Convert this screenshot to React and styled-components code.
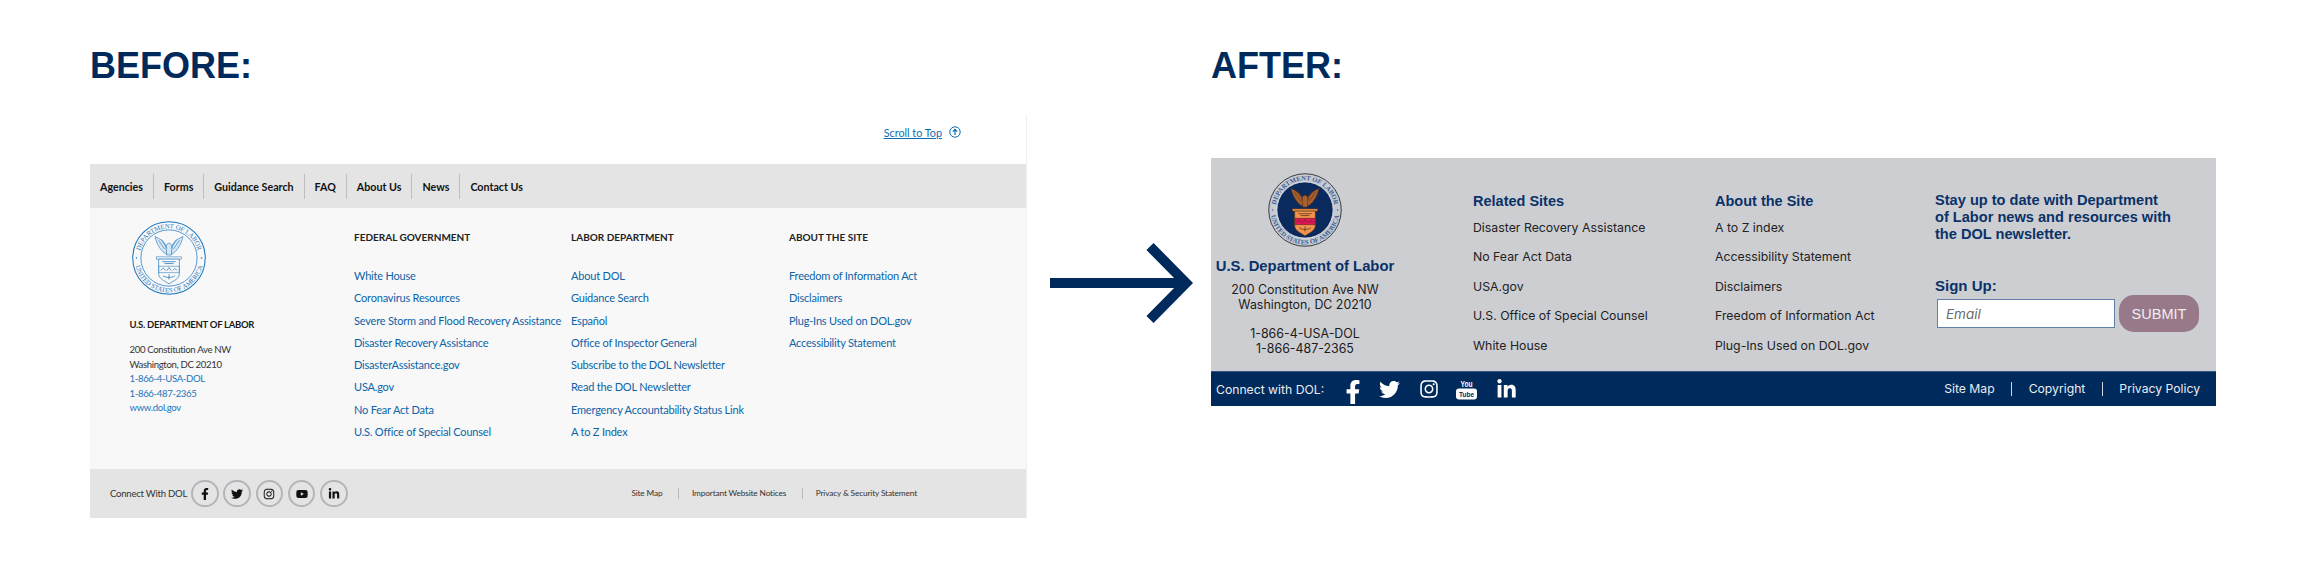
import React from "react";
import styled, { createGlobalStyle } from "styled-components";
import { FaFacebookF, FaTwitter, FaInstagram, FaYoutube, FaLinkedinIn } from "react-icons/fa";

const Global = createGlobalStyle`
  html, body { margin: 0; padding: 0; background: #fff; }
  * { box-sizing: border-box; }
`;

const NAVY = "#002a5c";
const OLD_FONT = `Lato, "Noto Sans", sans-serif`;
const NEW_FONT = `Inter, "Liberation Sans", sans-serif`;
const HEAD_FONT = `"Liberation Sans", Arial, sans-serif`;

const Page = styled.div`
  width: 2298px;
  height: 565px;
  overflow: hidden;
  display: flex;
  align-items: flex-start;
  padding-left: 90px;
  font-family: ${OLD_FONT};
`;
const Section = styled.section`
  width: ${(p) => p.$width}px;
  flex: none;
`;
const Heading = styled.h1`
  margin: 0 0 ${(p) => p.$gap}px;
  padding-top: 46px;
  height: 85px;
  font: 700 36px/39px ${HEAD_FONT};
  color: ${NAVY};
`;
const ArrowSlot = styled.div`
  flex: none;
  width: 184px;
  padding: 243px 0 0 23px;
  display: flex;
`;

/* BEFORE */
const OldPanel = styled.div`
  border-right: 1px solid #f1f1f1;
`;
const ScrollRow = styled.div`
  height: 49px;
  padding: 0 65px 15px 0;
  display: flex;
  justify-content: flex-end;
  align-items: center;
  gap: 7px;
`;
const ScrollLink = styled.a`
  font-size: 10.8px;
  color: #0b6cb5;
  text-decoration: underline;
`;
const OldNav = styled.nav`
  height: 44px;
  background: #e4e4e4;
  display: flex;
  align-items: center;
`;
const NavItem = styled.a`
  height: 25px;
  display: flex;
  align-items: center;
  padding: 0 10px;
  font-size: 10.7px;
  font-weight: 700;
  color: #111;
  & + & { border-left: 1px solid #bdbdbd; }
`;
const OldMain = styled.div`
  height: 261px;
  background: #f8f8f8;
  display: grid;
  grid-template-columns: 264px 217px 218px 1fr;
`;
const OrgCol = styled.div`
  padding: 13px 0 0 39.5px;
  display: flex;
  flex-direction: column;
`;
const SealSlot = styled.div`
  width: 74px;
  height: 74px;
  margin-left: ${(p) => p.$left}px;
`;
const OrgName = styled.div`
  margin-top: 23px;
  font-size: 9.5px;
  letter-spacing: -0.28px;
  line-height: 14px;
  font-weight: 700;
  color: #1b1b1b;
  white-space: nowrap;
`;
const Address = styled.div`
  margin-top: 11px;
  font-size: 9.6px;
  letter-spacing: -0.35px;
  line-height: 14.5px;
  color: #333;
`;
const AddressLink = styled.a`
  display: block;
  color: #1b75bc;
`;
const LinkCol = styled.div`
  padding-top: 22px;
`;
const ColTitle = styled.div`
  font-size: 10px;
  line-height: 14px;
  font-weight: 700;
  color: #222;
  margin-bottom: 21px;
  white-space: nowrap;
`;
const OldLink = styled.a`
  display: block;
  height: 22.3px;
  line-height: 22.3px;
  font-size: 11px;
  letter-spacing: -0.2px;
  color: #0b64a8;
  white-space: nowrap;
`;
const OldBottom = styled.div`
  height: 49px;
  background: #e4e4e4;
  display: flex;
  align-items: center;
  padding: 0 0 0 20px;
`;
const ConnectOld = styled.span`
  width: 81px;
  font-size: 9.6px;
  letter-spacing: -0.25px;
  color: #333;
  white-space: nowrap;
`;
const Circles = styled.div`
  display: flex;
  gap: 4.8px;
`;
const Circle = styled.span`
  width: 27.5px;
  height: 27.5px;
  border-radius: 50%;
  border: 2px solid #b4b4ba;
  display: flex;
  align-items: center;
  justify-content: center;
  color: #111;
  font-size: 12px;
`;
const OldLegal = styled.div`
  margin-left: auto;
  margin-right: 93.5px;
  display: flex;
  align-items: center;
`;
const OldLegalItem = styled.a`
  font-size: 8.3px;
  letter-spacing: -0.15px;
  line-height: 11px;
  color: #333;
  padding: 0 15.5px 0 13px;
  white-space: nowrap;
  & + & { border-left: 1px solid #bbb; }
`;

/* AFTER */
const NewPanel = styled.div`
  font-family: ${NEW_FONT};
`;
const NewMain = styled.div`
  height: 213px;
  background: #cdced2;
  display: grid;
  grid-template-columns: 262px 242px 220px 1fr;
`;
const NewOrg = styled.div`
  padding: 15px 0 0 2px;
  width: 186px;
  display: flex;
  flex-direction: column;
  align-items: center;
  text-align: center;
`;
const NewOrgName = styled.div`
  margin-top: 10px;
  font: 700 14.8px/18px ${HEAD_FONT};
  color: #0a3268;
  white-space: nowrap;
`;
const NewAddress = styled.div`
  margin-top: 8px;
  font-size: 12.4px;
  line-height: 14.7px;
  color: #1c1c1c;
  white-space: nowrap;
`;
const NewPhones = styled(NewAddress)`
  margin-top: 15px;
`;
const NewCol = styled.div`
  padding-top: 34px;
`;
const NewColTitle = styled.div`
  font: 700 14.5px/18px ${HEAD_FONT};
  color: #0a3268;
  margin-bottom: 3px;
`;
const NewLink = styled.a`
  display: block;
  height: 29.4px;
  line-height: 29.4px;
  font-size: 12.3px;
  color: #222;
  white-space: nowrap;
`;
const SignUpCol = styled.div`
  padding-top: 34px;
`;
const Pitch = styled.p`
  margin: 0;
  font: 700 14.6px/17px ${HEAD_FONT};
  color: #0a3268;
  white-space: nowrap;
`;
const SignLabel = styled.div`
  margin-top: 34px;
  font: 700 15px/18px ${HEAD_FONT};
  color: #0a3268;
`;
const SignRow = styled.div`
  display: flex;
  align-items: center;
  gap: 4px;
  margin-left: 2px;
`;
const EmailBox = styled.div`
  width: 178px;
  height: 29px;
  background: #fff;
  border: 1px solid #6080a8;
  padding-left: 8px;
  display: flex;
  align-items: center;
  font-size: 13.5px;
  font-style: italic;
  color: #6b6b6b;
`;
const Submit = styled.button`
  width: 80px;
  height: 37px;
  border: 0;
  padding: 0;
  border-radius: 15px;
  background: #97798a;
  color: #f2eef0;
  font: 400 14.5px ${HEAD_FONT};
`;
const NewBar = styled.div`
  height: 35px;
  background: ${NAVY};
  border-top: 1px solid #34557f;
  display: flex;
  align-items: center;
  padding: 0 0 0 5px;
  color: #e9edf3;
  font-size: 12.2px;
`;
const NewConnect = styled.span`
  white-space: nowrap;
  width: 125px;
`;
const SocialRow = styled.div`
  display: flex;
  align-items: center;
`;
const SocialIcon = styled.span`
  width: ${(p) => p.$w}px;
  padding-top: ${(p) => p.$drop || 0}px;
  display: flex;
  justify-content: flex-start;
  color: #fff;
`;
const NewLegal = styled.div`
  margin-left: auto;
  margin-right: 16px;
  display: flex;
  align-items: center;
`;
const NewLegalItem = styled.a`
  line-height: 14px;
  padding: 0 16.5px;
  white-space: nowrap;
  &:last-child { padding-right: 0; }
  & + & { border-left: 1px solid #cfd6e0; }
`;

function Seal({ filled, id }) {
  const ink = filled ? "#3d5f94" : "#1b75bc";
  const eagle = filled ? "#a9602f" : "#d6e6f3";
  const eagleLine = filled ? "#5b2f14" : "#1b75bc";
  const shield = filled ? "#f0944e" : "#f8f8f8";
  const band = filled ? "#df1459" : "#f8f8f8";
  const detail = filled ? "#5b2f14" : "#1b75bc";
  return (
    <svg viewBox="0 0 100 100" width="74" height="74">
      <defs>
        <path id={`${id}top`} d="M 10 50 A 40 40 0 0 1 90 50" />
        <path id={`${id}bot`} d="M 3.5 50 A 46.5 46.5 0 0 0 96.5 50" />
      </defs>
      <circle cx="50" cy="50" r="49" fill={filled ? "#c6cad2" : "none"} stroke={filled ? "#2b2b2b" : ink} strokeWidth={filled ? 1.2 : 1.4} />
      <circle cx="50" cy="50" r="38" fill={filled ? "#0a2a5e" : "none"} stroke={filled ? "#f0f0f0" : ink} strokeWidth="1" />
      <text fontFamily='"Liberation Serif", serif' fontSize="9" fill={ink} fontWeight={filled ? 700 : 400}>
        <textPath href={`#${id}top`} startOffset="50%" textAnchor="middle">DEPARTMENT OF LABOR</textPath>
      </text>
      <text fontFamily='"Liberation Serif", serif' fontSize="9" fill={ink} fontWeight={filled ? 700 : 400}>
        <textPath href={`#${id}bot`} startOffset="50%" textAnchor="middle">UNITED STATES OF AMERICA</textPath>
      </text>
      <circle cx="6" cy="50" r="1" fill={ink} />
      <circle cx="94" cy="50" r="1" fill={ink} />
      <g stroke={eagleLine} strokeWidth="0.8" fill={eagle}>
        <path d="M47 45 C40 42 34 33 31 21 C39 24 45 29 48 37 Z" />
        <path d="M53 45 C60 42 66 33 69 21 C61 24 55 29 52 37 Z" />
        <path d="M46 36 C46 32 48 30 50 30 C52 30 54 32 54 36 L53 46 H47 Z" />
        <path d="M36 26 L44 38 M40 25 L47 37 M64 26 L56 38 M60 25 L53 37" fill="none" />
      </g>
      <rect x="33" y="48.5" width="34" height="3" fill={shield} stroke={detail} strokeWidth="0.7" />
      <path d="M36 51.5 H64 V71 C64 78 56 81 50 85 C44 81 36 78 36 71 Z" fill={shield} stroke={detail} strokeWidth="0.9" />
      <rect x="36.4" y="61" width="27.2" height="9" fill={band} stroke={detail} strokeWidth="0.7" />
      <g stroke={detail} strokeWidth="1" fill="none">
        <path d="M41 55 H59 M44 57.5 L56 57.5" />
        <path d="M39 67 C41 63 43 63 45 67 M47 67 L50 63 L53 67 M55 67 L58 64 L61 67" />
        <path d="M42 74 C46 77 54 77 58 74 M50 72 V79" />
      </g>
    </svg>
  );
}

const ScrollIcon = () => (
  <svg width="12" height="12" viewBox="0 0 12 12" fill="none" stroke="#0b6cb5" strokeWidth="1">
    <circle cx="6" cy="6" r="5.2" />
    <path d="M6 9V3.6M3.8 5.6L6 3.4L8.2 5.6" strokeWidth="1.2" />
  </svg>
);

const Arrow = () => (
  <svg width="150" height="80" viewBox="0 0 150 80" fill="none" stroke={NAVY} strokeWidth="10">
    <path d="M0 40H132" />
    <path d="M100 3.5L136 40L100 76.5" />
  </svg>
);

const YouTubeMark = () => (
  <svg width="21" height="24" viewBox="0 0 21 24">
    <text x="10.5" y="10" textAnchor="middle" fontFamily='"Liberation Sans", sans-serif' fontSize="8.5" fontWeight="700" fill="#fff" textLength="12" lengthAdjust="spacingAndGlyphs">You</text>
    <rect x="0" y="11.5" width="21" height="11" rx="3" fill="#fff" />
    <text x="10.5" y="20" textAnchor="middle" fontFamily='"Liberation Sans", sans-serif' fontSize="8" fontWeight="700" fill={NAVY} textLength="15" lengthAdjust="spacingAndGlyphs">Tube</text>
  </svg>
);

const federal = ["White House", "Coronavirus Resources", "Severe Storm and Flood Recovery Assistance", "Disaster Recovery Assistance", "DisasterAssistance.gov", "USA.gov", "No Fear Act Data", "U.S. Office of Special Counsel"];
const labor = ["About DOL", "Guidance Search", "Español", "Office of Inspector General", "Subscribe to the DOL Newsletter", "Read the DOL Newsletter", "Emergency Accountability Status Link", "A to Z Index"];
const site = ["Freedom of Information Act", "Disclaimers", "Plug-Ins Used on DOL.gov", "Accessibility Statement"];
const nav = ["Agencies", "Forms", "Guidance Search", "FAQ", "About Us", "News", "Contact Us"];
const related = ["Disaster Recovery Assistance", "No Fear Act Data", "USA.gov", "U.S. Office of Special Counsel", "White House"];
const aboutSite = ["A to Z index", "Accessibility Statement", "Disclaimers", "Freedom of Information Act", "Plug-Ins Used on DOL.gov"];

export default function App() {
  return (
    <Page>
      <Global />
      <Section $width={937}>
        <Heading $gap={30}>BEFORE:</Heading>
        <OldPanel>
          <ScrollRow>
            <ScrollLink>Scroll to Top</ScrollLink>
            <ScrollIcon />
          </ScrollRow>
          <OldNav>
            {nav.map((n) => <NavItem key={n}>{n}</NavItem>)}
          </OldNav>
          <OldMain>
            <OrgCol>
              <SealSlot $left={2}><Seal id="old" /></SealSlot>
              <OrgName>U.S. DEPARTMENT OF LABOR</OrgName>
              <Address>
                200 Constitution Ave NW<br />
                Washington, DC 20210
                <AddressLink>1-866-4-USA-DOL</AddressLink>
                <AddressLink>1-866-487-2365</AddressLink>
                <AddressLink>www.dol.gov</AddressLink>
              </Address>
            </OrgCol>
            <LinkCol>
              <ColTitle>FEDERAL GOVERNMENT</ColTitle>
              {federal.map((l) => <OldLink key={l}>{l}</OldLink>)}
            </LinkCol>
            <LinkCol>
              <ColTitle>LABOR DEPARTMENT</ColTitle>
              {labor.map((l) => <OldLink key={l}>{l}</OldLink>)}
            </LinkCol>
            <LinkCol>
              <ColTitle>ABOUT THE SITE</ColTitle>
              {site.map((l) => <OldLink key={l}>{l}</OldLink>)}
            </LinkCol>
          </OldMain>
          <OldBottom>
            <ConnectOld>Connect With DOL</ConnectOld>
            <Circles>
              <Circle><FaFacebookF /></Circle>
              <Circle><FaTwitter /></Circle>
              <Circle><FaInstagram /></Circle>
              <Circle><FaYoutube /></Circle>
              <Circle><FaLinkedinIn /></Circle>
            </Circles>
            <OldLegal>
              <OldLegalItem>Site Map</OldLegalItem>
              <OldLegalItem>Important Website Notices</OldLegalItem>
              <OldLegalItem>Privacy &amp; Security Statement</OldLegalItem>
            </OldLegal>
          </OldBottom>
        </OldPanel>
      </Section>
      <ArrowSlot><Arrow /></ArrowSlot>
      <Section $width={1005}>
        <Heading $gap={73}>AFTER:</Heading>
        <NewPanel>
          <NewMain>
            <NewOrg>
              <SealSlot $left={0}><Seal id="new" filled /></SealSlot>
              <NewOrgName>U.S. Department of Labor</NewOrgName>
              <NewAddress>200 Constitution Ave NW<br />Washington, DC 20210</NewAddress>
              <NewPhones>1-866-4-USA-DOL<br />1-866-487-2365</NewPhones>
            </NewOrg>
            <NewCol>
              <NewColTitle>Related Sites</NewColTitle>
              {related.map((l) => <NewLink key={l}>{l}</NewLink>)}
            </NewCol>
            <NewCol>
              <NewColTitle>About the Site</NewColTitle>
              {aboutSite.map((l) => <NewLink key={l}>{l}</NewLink>)}
            </NewCol>
            <SignUpCol>
              <Pitch>Stay up to date with Department<br />of Labor news and resources with<br />the DOL newsletter.</Pitch>
              <SignLabel>Sign Up:</SignLabel>
              <SignRow>
                <EmailBox>Email</EmailBox>
                <Submit>SUBMIT</Submit>
              </SignRow>
            </SignUpCol>
          </NewMain>
          <NewBar>
            <NewConnect>Connect with DOL:</NewConnect>
            <SocialRow>
              <SocialIcon $w={38} $drop={6}><FaFacebookF size={24} /></SocialIcon>
              <SocialIcon $w={40}><FaTwitter size={21} /></SocialIcon>
              <SocialIcon $w={37}><FaInstagram size={20} /></SocialIcon>
              <SocialIcon $w={40}><YouTubeMark /></SocialIcon>
              <SocialIcon $w={24}><FaLinkedinIn size={21} /></SocialIcon>
            </SocialRow>
            <NewLegal>
              <NewLegalItem>Site Map</NewLegalItem>
              <NewLegalItem>Copyright</NewLegalItem>
              <NewLegalItem>Privacy Policy</NewLegalItem>
            </NewLegal>
          </NewBar>
        </NewPanel>
      </Section>
    </Page>
  );
}
